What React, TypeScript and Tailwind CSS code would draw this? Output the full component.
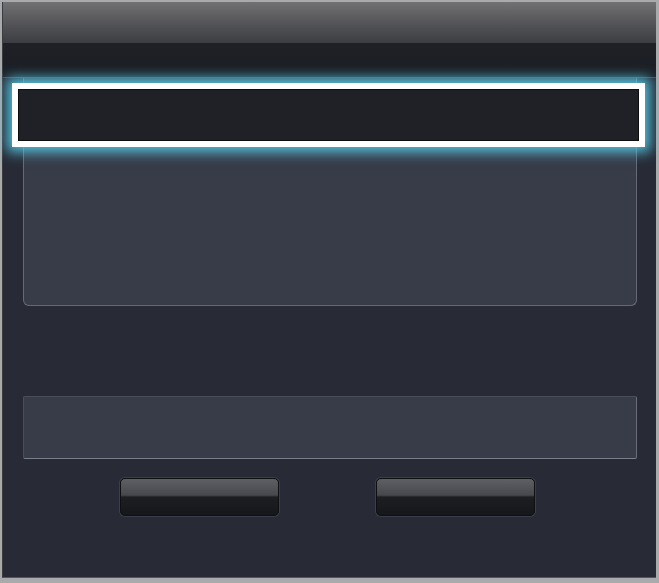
import React from 'react';

const GlossButton: React.FC = () => (
    <button className="w-[159px] h-[38px] rounded-[5px] border border-[#0e0f12] shadow-[0_0_0_1px_rgba(120,124,136,0.25)] bg-[linear-gradient(to_bottom,#5e6065_0%,#47484d_45%,#1d1e22_50%,#16171b_100%)]" />
);

const App: React.FC = () => {
    return (
        <div className="w-[659px] h-[583px] flex flex-col bg-[#a9aaac] pl-[2px] pt-[2px] pr-[3px] pb-[5px] font-['Liberation_Sans',sans-serif]">
            <div className="flex-1 flex flex-col bg-[#282b36] border-l border-[#3a3c42] border-b border-b-[#55575c]">
                {/* Title bar */}
                <div className="h-[41px] bg-[linear-gradient(to_bottom,#717173,#5b5b5e_40%,#3c3d42)]" />
                {/* Dark band */}
                <div className="h-[35px] bg-[linear-gradient(to_bottom,#1f2127,#1b1d23)] border-b border-[#4a4d57]" />

                <main className="flex-1 flex flex-col pl-[20px] pr-[19px]">
                    {/* Main panel with focus ring */}
                    <section className="relative h-[228px] bg-[#383b48] rounded-b-[6px] border-x border-b border-[#666a78]">
                        <div className="absolute left-[-12px] right-[-9px] top-[5px] h-[64px] border-[6px] border-white bg-[#1f2127] shadow-[0_0_12px_5px_rgba(85,200,228,0.95),inset_0_0_0_1px_rgba(0,0,0,0.6)]" />
                    </section>

                    {/* Lower panel */}
                    <section className="mt-[90px] h-[63px] bg-[#383b48] rounded-[2px] border border-[#4a4d5a] border-b-[#7a7e8c] border-r-[#6a6e7c]" />

                    {/* Buttons */}
                    <div className="mt-[19px] flex gap-[97px] pl-[97px]">
                        <GlossButton />
                        <GlossButton />
                    </div>
                </main>
            </div>
        </div>
    );
};

export default App;
